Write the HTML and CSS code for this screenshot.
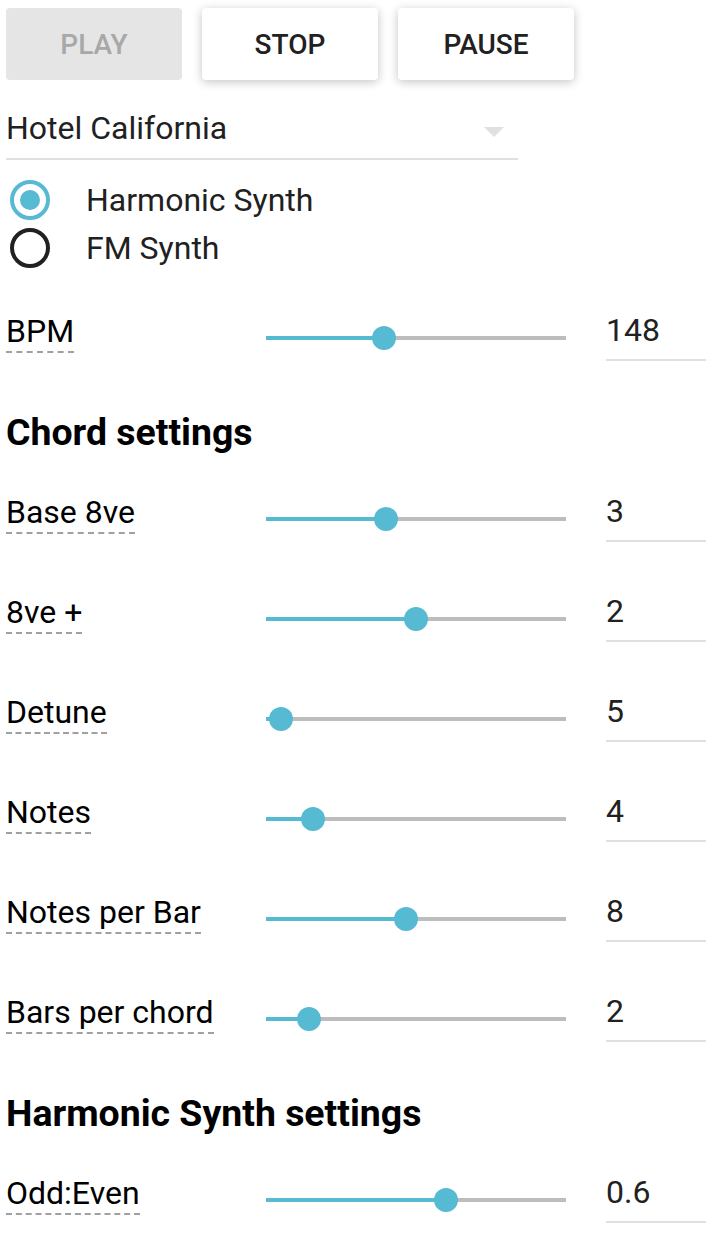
FILE: index.html
```html
<!DOCTYPE html>
<html lang="en">
<head>
    <meta charset="UTF-8">
    <meta name="viewport" content="width=device-width, initial-scale=1.0">
    <title>Chord Player</title>
    <link rel="stylesheet" href="styles.css">
</head>
<body>
    <div class="app">
        <div class="buttons">
            <button class="btn" disabled>Play</button>
            <button class="btn">Stop</button>
            <button class="btn">Pause</button>
        </div>

        <div class="select">
            <span class="select-text">Hotel California</span>
            <span class="select-arrow"></span>
        </div>

        <div class="radios">
            <label class="radio checked">
                <svg width="48" height="48" viewBox="0 0 48 48"><circle cx="24" cy="24" r="18" fill="none" stroke="#57bad3" stroke-width="4"/><circle cx="24" cy="24" r="10" fill="#57bad3"/></svg>
                <span>Harmonic Synth</span>
            </label>
            <label class="radio">
                <svg width="48" height="48" viewBox="0 0 48 48"><circle cx="24" cy="24" r="18" fill="none" stroke="#212121" stroke-width="4"/></svg>
                <span>FM Synth</span>
            </label>
        </div>

        <!-- slider positions: (value - min) / (max - min) -->
        <div class="row">
            <div class="label"><span title="Beats per minute">BPM</span></div>
            <div class="slider"><div class="track"><div class="fill" style="width: 39.33%"></div></div><div class="thumb" style="left: 39.33%"></div></div>
            <input class="value" type="text" value="148">
        </div>

        <h3>Chord settings</h3>
        <div class="row">
            <div class="label"><span>Base 8ve</span></div>
            <div class="slider"><div class="track"><div class="fill" style="width: 40%"></div></div><div class="thumb" style="left: 40%"></div></div>
            <input class="value" type="text" value="3">
        </div>
        <div class="row">
            <div class="label"><span>8ve +</span></div>
            <div class="slider"><div class="track"><div class="fill" style="width: 50%"></div></div><div class="thumb" style="left: 50%"></div></div>
            <input class="value" type="text" value="2">
        </div>
        <div class="row">
            <div class="label"><span>Detune</span></div>
            <div class="slider"><div class="track"><div class="fill" style="width: 5%"></div></div><div class="thumb" style="left: 5%"></div></div>
            <input class="value" type="text" value="5">
        </div>
        <div class="row">
            <div class="label"><span>Notes</span></div>
            <div class="slider"><div class="track"><div class="fill" style="width: 15.79%"></div></div><div class="thumb" style="left: 15.79%"></div></div>
            <input class="value" type="text" value="4">
        </div>
        <div class="row">
            <div class="label"><span>Notes per Bar</span></div>
            <div class="slider"><div class="track"><div class="fill" style="width: 46.67%"></div></div><div class="thumb" style="left: 46.67%"></div></div>
            <input class="value" type="text" value="8">
        </div>
        <div class="row">
            <div class="label"><span>Bars per chord</span></div>
            <div class="slider"><div class="track"><div class="fill" style="width: 14.29%"></div></div><div class="thumb" style="left: 14.29%"></div></div>
            <input class="value" type="text" value="2">
        </div>

        <h3>Harmonic Synth settings</h3>
        <div class="row">
            <div class="label"><span>Odd:Even</span></div>
            <div class="slider"><div class="track"><div class="fill" style="width: 60%"></div></div><div class="thumb" style="left: 60%"></div></div>
            <input class="value" type="text" value="0.6">
        </div>
    </div>
</body>
</html>
```

FILE: styles.css
```css
body {
    margin: 0;
    background-color: #ffffff;
    font-family: Roboto, "Liberation Sans", sans-serif;
    color: #000;
}
.app {
    padding: 8px 6px;
}
.buttons {
    display: flex;
    gap: 20px;
}
.btn {
    width: 176px;
    height: 72px;
    padding: 0;
    border: none;
    border-radius: 4px;
    background-color: #fff;
    color: #212121;
    font-family: Roboto, "Liberation Sans", sans-serif;
    font-size: 28px;
    font-weight: 500;
    text-transform: uppercase;
    box-shadow: 0 2px 12px rgba(0, 0, 0, 0.12), 0 2px 8px rgba(0, 0, 0, 0.12);
}
.btn:disabled {
    background-color: #e5e5e5;
    color: #a8a8a8;
    box-shadow: none;
}
.select {
    position: relative;
    width: 512px;
    margin-top: 24px;
    padding-bottom: 6px;
    border-bottom: 2px solid #e0e0e0;
}
.select-text {
    display: block;
    font-size: 32px;
    line-height: 48px;
    color: #212121;
}
.select-arrow {
    position: absolute;
    right: 14px;
    top: 23px;
    border-left: 10px solid transparent;
    border-right: 10px solid transparent;
    border-top: 10px solid #e0e0e0;
}
.radios {
    margin-top: 16px;
}
.radio {
    display: flex;
    align-items: center;
    height: 48px;
    font-size: 32px;
    color: #212121;
}
.radio svg {
    margin-right: 32px;
}
.row {
    display: flex;
    align-items: flex-start;
    height: 100px;
}
.radios + .row {
    margin-top: 16px;
}
.label {
    width: 260px;
    margin-top: 23px;
    font-size: 32px;
    line-height: 40px;
}
.label span {
    display: inline-block;
    border-bottom: 2px dashed #a0a0a0;
}
.slider {
    position: relative;
    width: 300px;
    height: 24px;
    margin-top: 38px;
}
.track {
    height: 4px;
    margin-top: 10px;
    background-color: #bdbdbd;
}
.fill {
    height: 100%;
    background-color: #57bad3;
}
.thumb {
    position: absolute;
    top: 0;
    width: 24px;
    height: 24px;
    margin-left: -12px;
    border-radius: 50%;
    background-color: #57bad3;
}
.value {
    width: 100px;
    height: 36px;
    margin: 24px 0 0 40px;
    padding: 0 0 11px;
    border: none;
    border-bottom: 2px solid #e0e0e0;
    font-family: Roboto, "Liberation Sans", sans-serif;
    font-size: 32px;
    color: #212121;
    outline: none;
    box-sizing: content-box;
}
h3 {
    margin: 22px 0 15px;
    font-size: 37.44px;
    line-height: 44px;
    font-weight: bold;
}
```
